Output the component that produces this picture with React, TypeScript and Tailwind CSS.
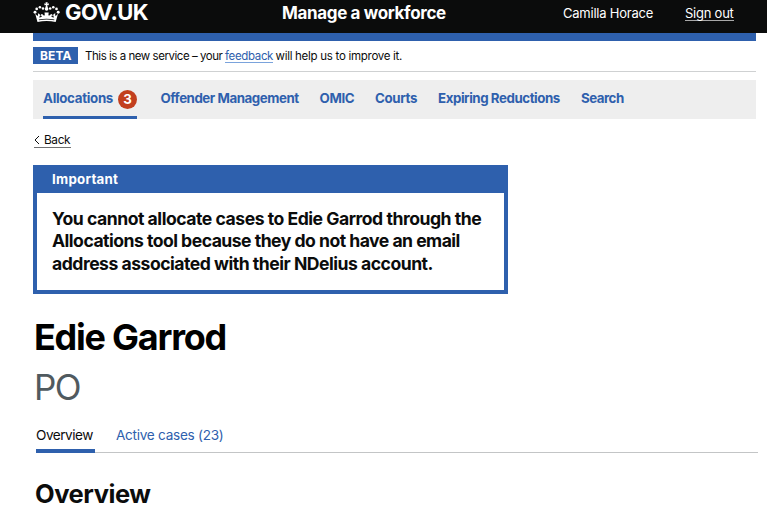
function Crown() {
  return (
    <svg width="28" height="21" viewBox="0 0 28 21" fill="#fff" className="shrink-0">
      <circle cx="2" cy="10.200" r="1.450" />
      <circle cx="3.700" cy="6.900" r="1.350" />
      <circle cx="6.900" cy="5.300" r="1.300" />
      <circle cx="10" cy="6.500" r="1.300" />
      <circle cx="17.200" cy="6.500" r="1.300" />
      <circle cx="20.300" cy="5.300" r="1.300" />
      <circle cx="23.500" cy="6.900" r="1.350" />
      <circle cx="25.200" cy="10.200" r="1.450" />
      <path d="M12.900 1.700 12.500.3h2.200l-.4 1.400 1.500-.4v2l-1.500-.4.5 3.100h-2.400l.5-3.100-1.500.4v-2z" />
      <circle cx="13.600" cy="7" r="1.800" />
      <path
        fillRule="evenodd"
        d="M2.200 11.800l2.300 2.300c.6-1 .7-1.700.3-2.900l1.700.9c.9 1.300.6 2.500-.5 3.200 1.400.4 2.700-.2 3-1.600-.6-.1-1 .1-1.400.5-.1-1.400.6-2.200 1.700-2.100.5 1.100 1.400 1.600 2.500 1.100l-.3-2.700h4.200l-.3 2.700c1.100.5 2 0 2.500-1.100 1.100-.1 1.800.7 1.700 2.100-.4-.4-.8-.6-1.400-.5.3 1.400 1.600 2 3 1.600-1.100-.7-1.400-1.900-.5-3.200l1.700-.9c-.4 1.200-.3 1.900.3 2.900l2.300-2.300-2.300 8.200c-6-1.500-12.200-1.500-18.200 0zM6 18.200c5-1 10.200-1 15.200 0l.2-.8c-5.100-1-10.500-1-15.600 0z"
      />
    </svg>
  );
}

export default function App() {
  return (
    <div className="h-[518px] w-[767px] overflow-hidden bg-white font-['Inter','Liberation_Sans',sans-serif] whitespace-nowrap text-[#0b0c0c]">
      <header className="flex h-[33px] items-start bg-[#0b0c0c] pl-[33px] text-white">
        <div className="mt-[2px]"><Crown /></div>
        <span className="ml-[4px] w-[217px] text-[22px] leading-[24px] font-bold tracking-[-0.5px]">GOV.UK</span>
        <span className="w-[281px] pt-[1px] text-[17px] leading-[24px] font-bold tracking-[-0.350px]">Manage a workforce</span>
        <span className="w-[122px] pt-[1px] text-[13px] leading-[24px] tracking-[-0.23px]">Camilla Horace</span>
        <a className="mt-[5px] h-[16px] border-b border-[#a8a8a8] text-[13px] leading-[16px] tracking-[-0.240px]">Sign out</a>
      </header>

      <div className="ml-[33px] h-[39px] w-[723px] border-b border-[#cfd1d2]">
        <div className="h-[7.5px] bg-[#2e60ad]" />
        <div className="flex pt-[6.500px]">
          <span className="h-[17px] w-[45px] bg-[#2e60ad] pl-[7px] text-[12px] leading-[17px] font-bold tracking-[0.1px] text-white">BETA</span>
          <p className="ml-[7px] flex text-[11.500px] leading-[18px] tracking-[-0.46px]">
            <span className="w-[140px]">This is a new service – your</span>
            <a className="h-[16px] w-[48px] border-b border-[#7aa3dc] tracking-[-0.35px] text-[#2e60ad]">feedback</a>
            <span className="ml-[2.500px] tracking-[-0.28px]">will help us to improve it.</span>
          </p>
        </div>
      </div>

      <nav className="mt-[8px] ml-[33px] flex h-[39px] w-[723px] bg-[#eeeeee] pl-[10px] text-[13.300px] leading-[37px] font-bold tracking-[-0.450px] text-[#2e60ad]">
        <a className="mr-[23.500px] flex w-[94px] items-center border-b-[3px] border-[#2e60ad]">
          <span className="w-[75px] pt-px tracking-[-0.300px]">Allocations</span>
          <span className="mt-[2px] flex size-[19px] items-center justify-center rounded-full bg-[#c23f1e] text-[13.300px] leading-[19px] tracking-normal text-white">3</span>
        </a>
        <a className="w-[159px]">Offender Management</a>
        <a className="w-[55.500px] tracking-[-0.350px]">OMIC</a>
        <a className="w-[63px] tracking-[-0.350px]">Courts</a>
        <a className="w-[143px] tracking-[-0.430px]">Expiring Reductions</a>
        <a className="tracking-[-0.500px]">Search</a>
      </nav>

      <a className="mt-[13px] ml-[34px] flex h-[16px] w-[37px] items-center border-b border-[#6f7071] text-[11.800px] leading-[16px] tracking-[-0.350px]">
        <svg width="10" height="10" viewBox="0 0 10 10" fill="none" stroke="#0b0c0c" strokeWidth="1"><path d="M5 1 1 5l4 4" /></svg>
        Back
      </a>

      <section className="mt-[17px] ml-[33px] h-[129px] w-[475px] border-4 border-t-0 border-[#2e60ad]">
        <h2 className="h-[27.500px] bg-[#2e60ad] pl-[15px] text-[13.300px] leading-[28px] font-bold tracking-[0.260px] text-white">Important</h2>
        <p className="pt-[15px] pl-[15px] text-[17.600px] leading-[22.700px] font-bold tracking-[-0.480px]">
          You cannot allocate cases to Edie Garrod through the<br />
          <span className="tracking-[-0.520px]">Allocations tool because they do not have an email</span><br />
          <span className="tracking-[-0.500px]">address associated with their NDelius account.</span>
        </p>
      </section>

      <h1 className="mt-[21px] ml-[34px] h-[50px] text-[36px] leading-[44px] font-bold tracking-[-1.250px] text-black">Edie Garrod</h1>
      <p className="ml-[34px] h-[50px] text-[35px] leading-[44px] tracking-[-1.5px] text-[#505a5f]">PO</p>

      <div className="ml-[36px] flex h-[38px] w-[722px] border-b border-[#c3c5c6] text-[13.600px] leading-[40px]">
        <span className="h-[38px] w-[59px] border-b-4 border-[#2e60ad] tracking-[-0.5px]">Overview</span>
        <span className="ml-[21px] tracking-[-0.280px] text-[#2e60ad]">Active cases (23)</span>
      </div>
      <h2 className="mt-[23px] ml-[35px] text-[25.500px] leading-[35px] font-bold tracking-[-0.450px]">Overview</h2>
    </div>
  );
}
